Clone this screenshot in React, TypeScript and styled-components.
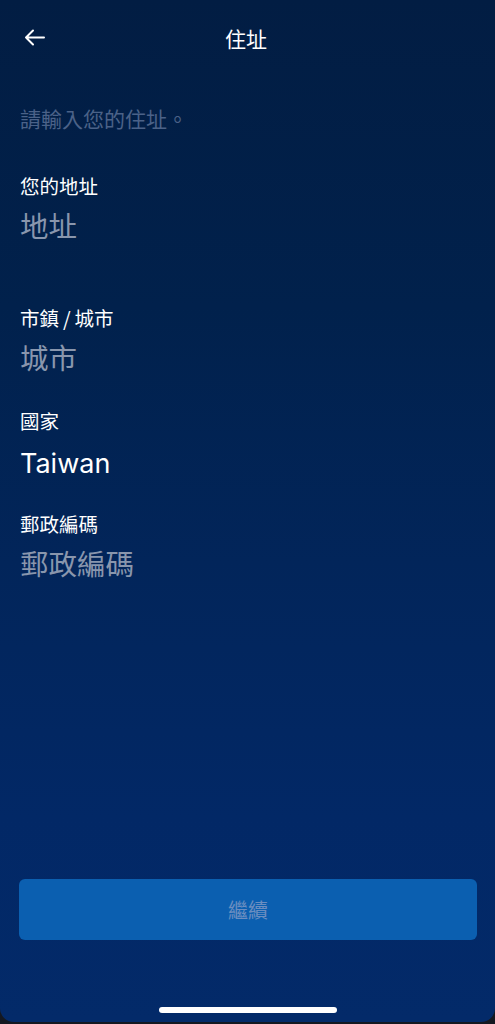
import React from "react";
import styled, { createGlobalStyle } from "styled-components";

const GlobalStyle = createGlobalStyle`
  html, body {
    margin: 0;
    padding: 0;
    background: #141821;
  }
  body {
    font-family: "Noto Sans CJK TC", "Noto Sans", sans-serif;
    -webkit-font-smoothing: antialiased;
  }
`;

const Screen = styled.div`
  position: relative;
  height: 1022px;
  display: flex;
  flex-direction: column;
  background: linear-gradient(180deg, #021d43 0%, #01214c 30%, #02255a 55%, #022866 80%, #032a69 100%);
  border-bottom-left-radius: 14px;
  border-bottom-right-radius: 14px;
  overflow: hidden;
`;

const Header = styled.header`
  height: 75px;
  display: grid;
  grid-template-columns: 60px 1fr 60px;
  align-items: center;
  padding: 0 20px 0 24px;
  box-sizing: border-box;
`;

const BackButton = styled.button`
  width: 22px;
  height: 22px;
  padding: 0;
  border: 0;
  background: transparent;
  display: flex;
  align-items: center;
  color: #ffffff;
`;

const Title = styled.h1`
  margin: 0 0 0 -7px;
  text-align: center;
  font-size: 21px;
  font-weight: 400;
  color: #ffffff;
  line-height: 26px;
`;

const Body = styled.main`
  flex: 1;
  display: flex;
  flex-direction: column;
  padding: 0 18px 0 20px;
`;

const Intro = styled.p`
  margin: 30px 0 0;
  font-size: 21px;
  line-height: 26px;
  color: #4b6288;
`;

const Fields = styled.div`
  margin-top: 43px;
  display: flex;
  flex-direction: column;
`;

const Field = styled.div<{ $gapAfter: number }>`
  display: flex;
  flex-direction: column;
  margin-bottom: ${(p) => p.$gapAfter}px;
`;

const Label = styled.label`
  font-size: 19.5px;
  line-height: 24px;
  color: #ffffff;
`;

const Value = styled.div<{ $filled?: boolean }>`
  margin-top: ${(p) => (p.$filled ? "13px" : "9px")};
  margin-bottom: ${(p) => (p.$filled ? "-2px" : "2px")};
  font-family: ${(p) => (p.$filled ? `Inter, Roboto, "Noto Sans CJK TC", sans-serif` : `"Noto Sans CJK TC", sans-serif`)};
  font-size: ${(p) => (p.$filled ? "27px" : "28.5px")};
  line-height: 36px;
  color: ${(p) => (p.$filled ? "#ffffff" : "#8996ad")};
`;

const Spacer = styled.div`
  flex: 1;
`;

const ContinueButton = styled.button`
  margin-left: -1px;
  height: 61px;
  border: 0;
  border-radius: 6px;
  background: #0b5fb0;
  color: #6c8ec0;
  font-family: "Noto Sans CJK TC", sans-serif;
  font-size: 20px;
  font-weight: 400;
`;

const HomeArea = styled.div`
  height: 82px;
  display: flex;
  align-items: flex-end;
  justify-content: center;
  padding-bottom: 9px;
  box-sizing: border-box;
`;

const HomeBar = styled.div`
  width: 178px;
  height: 6px;
  border-radius: 3px;
  background: #ffffff;
`;

const fields = [
  { label: "您的地址", value: "地址", filled: false, gap: 61 },
  { label: "市鎮\u2009/\u2009城市", value: "城市", filled: false, gap: 32 },
  { label: "國家", value: "Taiwan", filled: true, gap: 32 },
  { label: "郵政編碼", value: "郵政編碼", filled: false, gap: 0 },
];

export default function App() {
  return (
    <>
      <GlobalStyle />
      <Screen>
        <Header>
          <BackButton aria-label="返回">
            <svg width="21" height="17" viewBox="0 0 21 17" fill="none">
              <path
                d="M20 8.5H2 M9 1.5L2 8.5L9 15.5"
                stroke="currentColor"
                strokeWidth="2"
                strokeLinecap="round"
                strokeLinejoin="round"
              />
            </svg>
          </BackButton>
          <Title>住址</Title>
          <span />
        </Header>
        <Body>
          <Intro>請輸入您的住址。</Intro>
          <Fields>
            {fields.map((f) => (
              <Field key={f.value} $gapAfter={f.gap}>
                <Label>{f.label}</Label>
                <Value $filled={f.filled}>{f.value}</Value>
              </Field>
            ))}
          </Fields>
          <Spacer />
          <ContinueButton>繼續</ContinueButton>
        </Body>
        <HomeArea>
          <HomeBar />
        </HomeArea>
      </Screen>
    </>
  );
}
